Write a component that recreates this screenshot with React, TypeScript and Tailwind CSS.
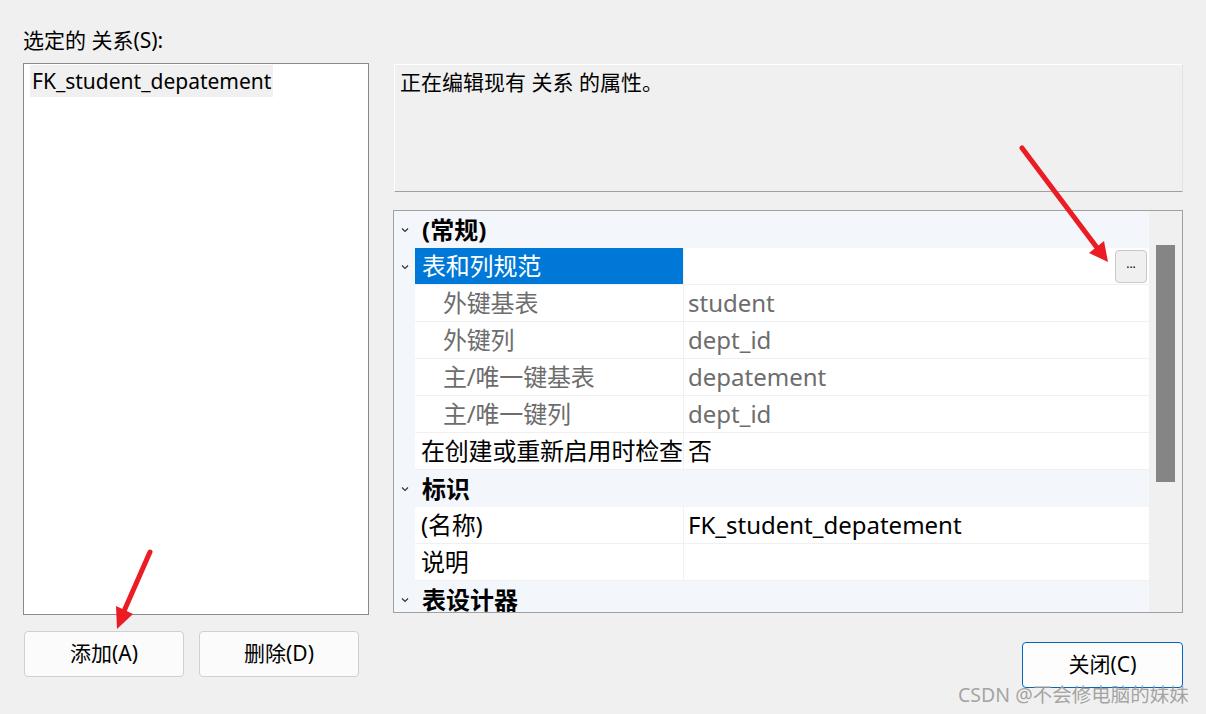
import React from "react";

const FONT = { fontFamily: '"Noto Sans", "Noto Sans CJK SC", sans-serif' };

type Row =
  | { kind: "cat"; name: string }
  | { kind: "prop"; name: string; value?: string; sub?: boolean; selected?: boolean; expand?: boolean };

const ROWS: Row[] = [
  { kind: "cat", name: "(常规)" },
  { kind: "prop", name: "表和列规范", selected: true, expand: true },
  { kind: "prop", name: "外键基表", value: "student", sub: true },
  { kind: "prop", name: "外键列", value: "dept_id", sub: true },
  { kind: "prop", name: "主/唯一键基表", value: "depatement", sub: true },
  { kind: "prop", name: "主/唯一键列", value: "dept_id", sub: true },
  { kind: "prop", name: "在创建或重新启用时检查", value: "否" },
  { kind: "cat", name: "标识" },
  { kind: "prop", name: "(名称)", value: "FK_student_depatement" },
  { kind: "prop", name: "说明", value: "" },
  { kind: "cat", name: "表设计器" },
];

function Chevron() {
  return (
    <svg width="8" height="6" viewBox="0 0 8 6" className="block">
      <path d="M1 1.5 L4 4.5 L7 1.5" fill="none" stroke="#333" strokeWidth="1.2" />
    </svg>
  );
}

function GridRow({ row }: { row: Row }) {
  if (row.kind === "cat") {
    return (
      <div className="flex h-[37px] shrink-0 bg-[#f3f6fb]">
        <div className="w-[21px] flex items-center justify-center">
          <Chevron />
        </div>
        <div className="pl-[7px] flex items-center text-[24px] font-bold text-black">{row.name}</div>
      </div>
    );
  }
  return (
    <div className="flex h-[37px] shrink-0">
      <div className="w-[21px] bg-[#f3f6fb] flex items-center justify-center">{row.expand && <Chevron />}</div>
      <div className="flex-1 flex bg-white border-b border-[#f0f0f0]">
        <div
          className={`w-[268px] shrink-0 flex items-center whitespace-nowrap text-[24px] ${
            row.selected ? "bg-[#0078d7] text-white pl-[7px]" : row.sub ? "text-[#6d6d6d] pl-[28px]" : "text-black pl-[6px]"
          }`}
        >
          <span className="tracking-[-0.2px]">{row.name}</span>
        </div>
        <div className="w-px bg-[#f0f0f0]" />
        <div className={`flex-1 flex items-center pl-[4px] text-[24px] ${row.sub ? "text-[#6d6d6d]" : "text-black"}`}>
          {row.value}
          {row.selected && (
            <div className="ml-auto mr-[2px] w-[32px] h-[33px] rounded-[4px] border border-[#c8c8c8] bg-[#f0f0f0] flex items-center justify-center text-[12px] text-black leading-none pb-[4px]">
              ...
            </div>
          )}
        </div>
      </div>
    </div>
  );
}

function Arrow({ x1, y1, hx1, hy1, hx2, hy2, tx, ty }: { x1: number; y1: number; hx1: number; hy1: number; hx2: number; hy2: number; tx: number; ty: number }) {
  const bx = (hx1 + hx2) / 2;
  const by = (hy1 + hy2) / 2;
  return (
    <>
      <line x1={x1} y1={y1} x2={bx} y2={by} stroke="#ec1c24" strokeWidth="5" strokeLinecap="round" />
      <polygon points={`${hx1},${hy1} ${hx2},${hy2} ${tx},${ty}`} fill="#ec1c24" />
    </>
  );
}

export default function App() {
  return (
    <div className="relative w-[1206px] h-[714px] bg-[#f0f0f0] overflow-hidden flex pl-[23px]" style={FONT}>
      {/* left: relation list */}
      <div className="w-[346px] flex flex-col pt-[26px]">
        <div className="text-[21px] leading-[28px] h-[37px] text-black">选定的 关系(S):</div>
        <div className="h-[552px] border border-[#8a8a8a] bg-white p-[1px] pl-[6px]">
          <div className="inline-block bg-[#f0f0f0] px-[2px] h-[32px] leading-[32px] text-[21px] text-black">
            FK_student_depatement
          </div>
        </div>
        <div className="flex gap-[15px] mt-[16px] pl-[1px]">
          <button className="w-[160px] h-[46px] rounded-[4px] border border-[#d0d0d0] bg-[#fbfbfb] text-[21px] text-black">
            添加(A)
          </button>
          <button className="w-[160px] h-[46px] rounded-[4px] border border-[#d0d0d0] bg-[#fbfbfb] text-[21px] text-black">
            删除(D)
          </button>
        </div>
      </div>

      {/* right: properties */}
      <div className="ml-[24px] w-[790px] flex flex-col pt-[64px]">
        <div className="ml-[1px] w-[789px] h-[128px] border-t border-l border-white border-r border-r-[#e3e3e3] border-b border-b-[#a0a0a0] px-[5px] pt-[2px] text-[21px] leading-[30px] text-black">
          正在编辑现有 关系 的属性。
        </div>
        <div className="mt-[18px] h-[403px] border border-[#a0a0a0] flex overflow-hidden">
          <div className="w-[755px] flex flex-col overflow-hidden">
            {ROWS.map((r, i) => (
              <GridRow key={i} row={r} />
            ))}
          </div>
          <div className="flex-1 bg-[#f0f0f0] pt-[34px] pl-[7px]">
            <div className="w-[19px] h-[237px] bg-[#858585]" />
          </div>
        </div>
        <div className="flex justify-end mt-[29px]">
          <button className="w-[161px] h-[46px] rounded-[4px] border border-[#0067c0] bg-[#fdfdfd] text-[21px] text-black">
            关闭(C)
          </button>
        </div>
      </div>

      {/* annotations */}
      <svg className="absolute inset-0 pointer-events-none" width="1206" height="714">
        <Arrow x1={1022} y1={148} hx1={1089} hy1={253} hx2={1104} hy2={241} tx={1108} ty={262} />
        <Arrow x1={150} y1={552} hx1={116} hy1={606} hx2={133} hy2={614} tx={117} ty={629} />
      </svg>
      <div className="absolute left-[958px] top-[680px] text-[19.5px] text-[#9a9a9a]/90 whitespace-nowrap">
        CSDN @不会修电脑的妹妹
      </div>
    </div>
  );
}
